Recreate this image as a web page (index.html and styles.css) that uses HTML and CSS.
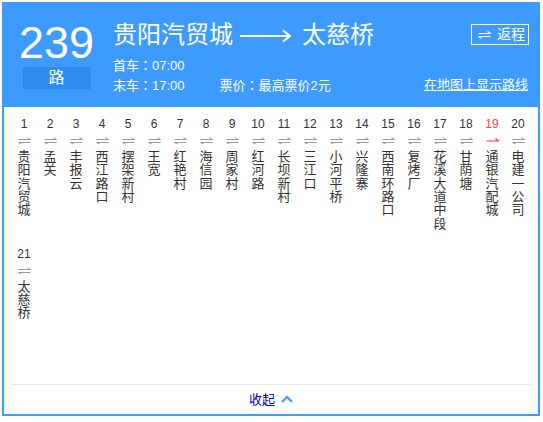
FILE: index.html
```html
<!DOCTYPE html>
<html lang="zh-CN">
<head>
<meta charset="utf-8">
<title>239路</title>
<link rel="stylesheet" href="styles.css">
</head>
<body>
<div class="card">
  <div class="header">
    <div class="route-no">
      <div class="num">239</div>
      <div class="lu">路</div>
    </div>
    <div class="main">
      <div class="title-row">
        <span class="title">贵阳汽贸城</span>
        <svg class="title-arrow" width="52" height="14" viewBox="0 0 52 14"><line x1="0" y1="7" x2="50" y2="7" stroke="#fff" stroke-width="2"/><polyline points="43,1.5 50,7 43,12.5" fill="none" stroke="#fff" stroke-width="2"/></svg>
        <span class="title">太慈桥</span>
        <a class="return-btn" href="#"><svg width="13" height="8" viewBox="0 0 13 8"><path d="M0.5 2.5H12.5L9.5 0.5M12.5 5.5H0.5L3.5 7.5" fill="none" stroke="#fff" stroke-width="1.2"/></svg><span>返程</span></a>
      </div>
      <div class="info">首车<span class="colon" lang="zh-TW">：</span>07:00</div>
      <div class="info info-row">
        <span>末车<span class="colon" lang="zh-TW">：</span>17:00</span>
        <span class="price">票价<span class="colon" lang="zh-TW">：</span>最高票价2元</span>
        <a class="map-link" href="#">在地图上显示路线</a>
      </div>
    </div>
  </div>
  <div class="stops">
    <div class="stop"><div class="no">1</div><svg class="dir" width="13" height="7" viewBox="0 0 13 7"><path d="M0.5 2.5H12.5L9.5 0.5M12.5 5.5H0.5L3.5 7" fill="none" stroke="#999" stroke-width="1"/></svg><div class="name">贵阳汽贸城</div></div>
    <div class="stop"><div class="no">2</div><svg class="dir" width="13" height="7" viewBox="0 0 13 7"><path d="M0.5 2.5H12.5L9.5 0.5M12.5 5.5H0.5L3.5 7" fill="none" stroke="#999" stroke-width="1"/></svg><div class="name">孟关</div></div>
    <div class="stop"><div class="no">3</div><svg class="dir" width="13" height="7" viewBox="0 0 13 7"><path d="M0.5 2.5H12.5L9.5 0.5M12.5 5.5H0.5L3.5 7" fill="none" stroke="#999" stroke-width="1"/></svg><div class="name">丰报云</div></div>
    <div class="stop"><div class="no">4</div><svg class="dir" width="13" height="7" viewBox="0 0 13 7"><path d="M0.5 2.5H12.5L9.5 0.5M12.5 5.5H0.5L3.5 7" fill="none" stroke="#999" stroke-width="1"/></svg><div class="name">西江路口</div></div>
    <div class="stop"><div class="no">5</div><svg class="dir" width="13" height="7" viewBox="0 0 13 7"><path d="M0.5 2.5H12.5L9.5 0.5M12.5 5.5H0.5L3.5 7" fill="none" stroke="#999" stroke-width="1"/></svg><div class="name">摆架新村</div></div>
    <div class="stop"><div class="no">6</div><svg class="dir" width="13" height="7" viewBox="0 0 13 7"><path d="M0.5 2.5H12.5L9.5 0.5M12.5 5.5H0.5L3.5 7" fill="none" stroke="#999" stroke-width="1"/></svg><div class="name">王宽</div></div>
    <div class="stop"><div class="no">7</div><svg class="dir" width="13" height="7" viewBox="0 0 13 7"><path d="M0.5 2.5H12.5L9.5 0.5M12.5 5.5H0.5L3.5 7" fill="none" stroke="#999" stroke-width="1"/></svg><div class="name">红艳村</div></div>
    <div class="stop"><div class="no">8</div><svg class="dir" width="13" height="7" viewBox="0 0 13 7"><path d="M0.5 2.5H12.5L9.5 0.5M12.5 5.5H0.5L3.5 7" fill="none" stroke="#999" stroke-width="1"/></svg><div class="name">海信园</div></div>
    <div class="stop"><div class="no">9</div><svg class="dir" width="13" height="7" viewBox="0 0 13 7"><path d="M0.5 2.5H12.5L9.5 0.5M12.5 5.5H0.5L3.5 7" fill="none" stroke="#999" stroke-width="1"/></svg><div class="name">周家村</div></div>
    <div class="stop"><div class="no">10</div><svg class="dir" width="13" height="7" viewBox="0 0 13 7"><path d="M0.5 2.5H12.5L9.5 0.5M12.5 5.5H0.5L3.5 7" fill="none" stroke="#999" stroke-width="1"/></svg><div class="name">红河路</div></div>
    <div class="stop"><div class="no">11</div><svg class="dir" width="13" height="7" viewBox="0 0 13 7"><path d="M0.5 2.5H12.5L9.5 0.5M12.5 5.5H0.5L3.5 7" fill="none" stroke="#999" stroke-width="1"/></svg><div class="name">长坝新村</div></div>
    <div class="stop"><div class="no">12</div><svg class="dir" width="13" height="7" viewBox="0 0 13 7"><path d="M0.5 2.5H12.5L9.5 0.5M12.5 5.5H0.5L3.5 7" fill="none" stroke="#999" stroke-width="1"/></svg><div class="name">三江口</div></div>
    <div class="stop"><div class="no">13</div><svg class="dir" width="13" height="7" viewBox="0 0 13 7"><path d="M0.5 2.5H12.5L9.5 0.5M12.5 5.5H0.5L3.5 7" fill="none" stroke="#999" stroke-width="1"/></svg><div class="name">小河平桥</div></div>
    <div class="stop"><div class="no">14</div><svg class="dir" width="13" height="7" viewBox="0 0 13 7"><path d="M0.5 2.5H12.5L9.5 0.5M12.5 5.5H0.5L3.5 7" fill="none" stroke="#999" stroke-width="1"/></svg><div class="name">兴隆寨</div></div>
    <div class="stop"><div class="no">15</div><svg class="dir" width="13" height="7" viewBox="0 0 13 7"><path d="M0.5 2.5H12.5L9.5 0.5M12.5 5.5H0.5L3.5 7" fill="none" stroke="#999" stroke-width="1"/></svg><div class="name">西南环路口</div></div>
    <div class="stop"><div class="no">16</div><svg class="dir" width="13" height="7" viewBox="0 0 13 7"><path d="M0.5 2.5H12.5L9.5 0.5M12.5 5.5H0.5L3.5 7" fill="none" stroke="#999" stroke-width="1"/></svg><div class="name">复烤厂</div></div>
    <div class="stop"><div class="no">17</div><svg class="dir" width="13" height="7" viewBox="0 0 13 7"><path d="M0.5 2.5H12.5L9.5 0.5M12.5 5.5H0.5L3.5 7" fill="none" stroke="#999" stroke-width="1"/></svg><div class="name">花溪大道中段</div></div>
    <div class="stop"><div class="no">18</div><svg class="dir" width="13" height="7" viewBox="0 0 13 7"><path d="M0.5 2.5H12.5L9.5 0.5M12.5 5.5H0.5L3.5 7" fill="none" stroke="#999" stroke-width="1"/></svg><div class="name">甘荫塘</div></div>
    <div class="stop current"><div class="no">19</div><svg class="dir" width="13" height="7" viewBox="0 0 13 7"><path d="M0.5 4H12.5L9.5 1.5" fill="none" stroke="#f33" stroke-width="1.2"/></svg><div class="name">通银汽配城</div></div>
    <div class="stop"><div class="no">20</div><svg class="dir" width="13" height="7" viewBox="0 0 13 7"><path d="M0.5 2.5H12.5L9.5 0.5M12.5 5.5H0.5L3.5 7" fill="none" stroke="#999" stroke-width="1"/></svg><div class="name">电建一公司</div></div>
    <div class="stop"><div class="no">21</div><svg class="dir" width="13" height="7" viewBox="0 0 13 7"><path d="M0.5 2.5H12.5L9.5 0.5M12.5 5.5H0.5L3.5 7" fill="none" stroke="#999" stroke-width="1"/></svg><div class="name">太慈桥</div></div>
  </div>
  <div class="footer">
    <a class="collapse" href="#">收起<svg width="12" height="8" viewBox="0 0 12 8"><polyline points="1,7 6,2 11,7" fill="none" stroke="#3d9bff" stroke-width="2.2"/></svg></a>
  </div>
</div>
</body>
</html>
```
FILE: styles.css
```css
* { box-sizing: border-box; }
body {
  margin: 0;
  background: #fff;
  font-family: "Liberation Sans", "Noto Sans CJK SC", sans-serif;
}
a { text-decoration: none; }
.card {
  margin: 2px;
  width: 538px;
  height: 414px;
  border: 2px solid #3d9bff;
  display: flex;
  flex-direction: column;
}
.header {
  height: 103px;
  background: #3d9bff;
  color: #fff;
  display: flex;
  padding: 12px 10px 0 15px;
}
.route-no {
  width: 75px;
  display: flex;
  flex-direction: column;
  align-items: center;
}
.num {
  font-size: 45px;
  line-height: 46px;
  height: 46px;
  margin-top: 4px;
}
.lu {
  width: 68px;
  height: 22px;
  margin-top: 1px;
  background: #2e8bef;
  font-size: 16px;
  line-height: 22px;
  text-align: center;
}
.main {
  flex: 1;
  margin-left: 19px;
  display: flex;
  flex-direction: column;
}
.title-row {
  display: flex;
  align-items: flex-start;
  height: 30px;
  margin-top: 4px;
}
.title {
  font-size: 24px;
  line-height: 30px;
}
.title-arrow {
  margin: 9px 10px 0 7px;
}
.return-btn {
  margin-left: auto;
  margin-top: 4px;
  margin-right: -1px;
  height: 21px;
  width: 58px;
  border: 1px solid #fff;
  color: #fff;
  display: flex;
  align-items: center;
  padding-left: 6px;
  font-size: 14px;
  line-height: 19px;
}
.return-btn span { margin-left: 6px; }
.info {
  font-size: 13px;
  line-height: 19px;
}
.colon {
  font-family: "Noto Sans CJK TC", "Noto Sans CJK SC", sans-serif;
}
.title-row + .info { margin-top: 5px; }
.info-row {
  display: flex;
}
.price { margin-left: 35px; }
.map-link {
  margin-left: auto;
  color: #fff;
  text-decoration: underline;
}
.stops {
  height: 277px;
  padding: 9px 0 0 7px;
  display: flex;
  flex-wrap: wrap;
  align-content: flex-start;
  row-gap: 15.6px;
}
.stop {
  width: 26px;
  display: flex;
  flex-direction: column;
  align-items: center;
  color: #333;
}
.no {
  font-size: 12px;
  line-height: 16px;
  height: 16px;
}
.dir {
  display: block;
  margin-top: 5px;
}
.name {
  width: 13px;
  margin-top: 6px;
  font-size: 13px;
  line-height: 13.35px;
  text-align: center;
}
.current .no { color: #ff4040; }
.footer {
  margin: 0 7px;
  border-top: 1px solid #e8e8e8;
  flex: 1;
  display: flex;
  justify-content: center;
  align-items: center;
}
.collapse {
  color: #0000cc;
  font-size: 13px;
  line-height: 16px;
  display: flex;
  align-items: center;
}
.collapse svg { margin-left: 6px; margin-top: -1px; }
```
